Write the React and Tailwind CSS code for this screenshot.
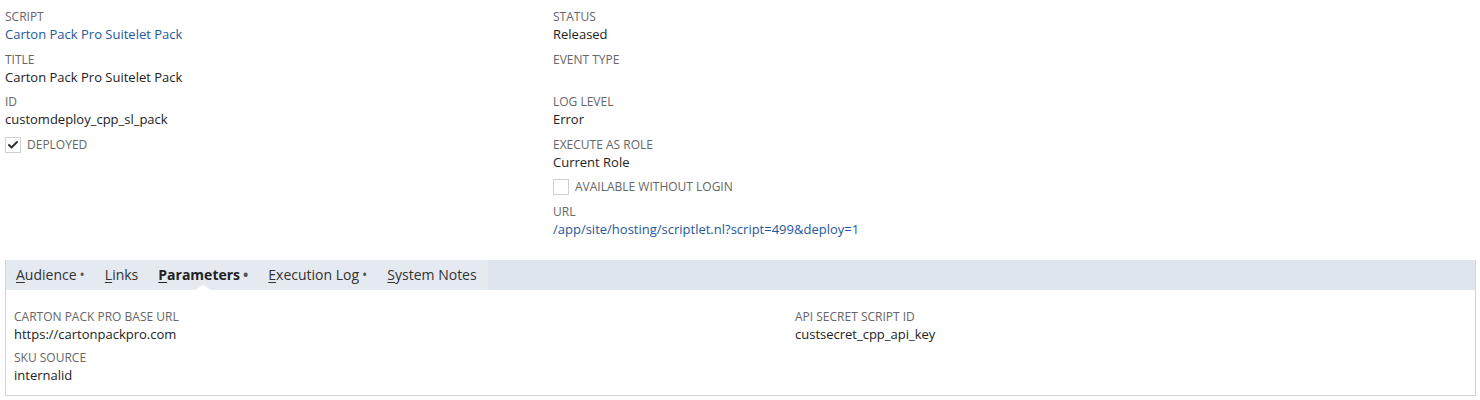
import { Check } from "lucide-react";

function Field({ label, children, link, gap = "mb-[7.5px]" }) {
  return (
    <div className={gap}>
      <div className="text-[12px] leading-[17px] text-[#666] uppercase">{label}</div>
      <div className={`text-[13px] leading-[18px] min-h-[18px] ${link ? "text-[#24589e]" : "text-[#222]"}`}>
        {children}
      </div>
    </div>
  );
}

function CheckRow({ label, checked }) {
  return (
    <div className="flex items-center gap-[6px] mb-[7px] h-[18px]">
      <span className="w-[16px] h-[16px] border border-[#d0d0d0] bg-white flex items-center justify-center">
        {checked && <Check size={12} strokeWidth={4} className="text-[#333]" />}
      </span>
      <span className="text-[12px] text-[#666] uppercase">{label}</span>
    </div>
  );
}

function Tab({ label, dot, active }) {
  const [first, ...rest] = label;
  return (
    <div className={`relative flex items-center px-[10px] h-full text-[14px] ${active ? "font-bold text-[#222]" : "text-[#333]"}`}>
      <span>
        <span className="underline underline-offset-2">{first}</span>
        {rest.join("")}
      </span>
      {dot && <span className="ml-[3px] text-[14px] leading-none text-[#555]">•</span>}
      {active && (
        <span className="absolute left-1/2 -translate-x-1/2 bottom-0 w-0 h-0 border-l-[8px] border-r-[8px] border-b-[5px] border-l-transparent border-r-transparent border-b-white" />
      )}
    </div>
  );
}

export default function App() {
  return (
    <div className="bg-white w-[1480px] h-[400px] font-['Open_Sans',sans-serif]">
      <div className="grid grid-cols-[548px_1fr] px-[5px] pt-[8px]">
        <div>
          <Field label="Script" link>Carton Pack Pro Suitelet Pack</Field>
          <Field label="Title">Carton Pack Pro Suitelet Pack</Field>
          <Field label="ID">customdeploy_cpp_sl_pack</Field>
          <CheckRow label="Deployed" checked />
        </div>
        <div>
          <Field label="Status">Released</Field>
          <Field label="Event Type"></Field>
          <Field label="Log Level">Error</Field>
          <Field label="Execute as Role">Current Role</Field>
          <CheckRow label="Available without login" />
          <Field label="URL" link>/app/site/hosting/scriptlet.nl?script=499&amp;deploy=1</Field>
        </div>
      </div>

      <div className="ml-[5px] mr-[4px] mt-[14px] border border-[#d4d4d4] border-t-0">
        <div className="h-[30px] bg-[#e0e6ef] flex">
          <div className="flex h-full bg-[#e5e9f0] pr-[1px]">
            <Tab label="Audience" dot />
            <Tab label="Links" />
            <Tab label="Parameters" dot active />
            <Tab label="Execution Log" dot />
            <Tab label="System Notes" />
          </div>
        </div>
        <div className="grid grid-cols-[781px_1fr] px-[8px] pt-[18px] pb-[5px]">
          <div>
            <Field label="Carton Pack Pro Base URL" gap="mb-[6px]">https://cartonpackpro.com</Field>
            <Field label="SKU Source" gap="mb-[6px]">internalid</Field>
          </div>
          <div>
            <Field label="API Secret Script ID" gap="mb-[6px]">custsecret_cpp_api_key</Field>
          </div>
        </div>
      </div>
    </div>
  );
}
